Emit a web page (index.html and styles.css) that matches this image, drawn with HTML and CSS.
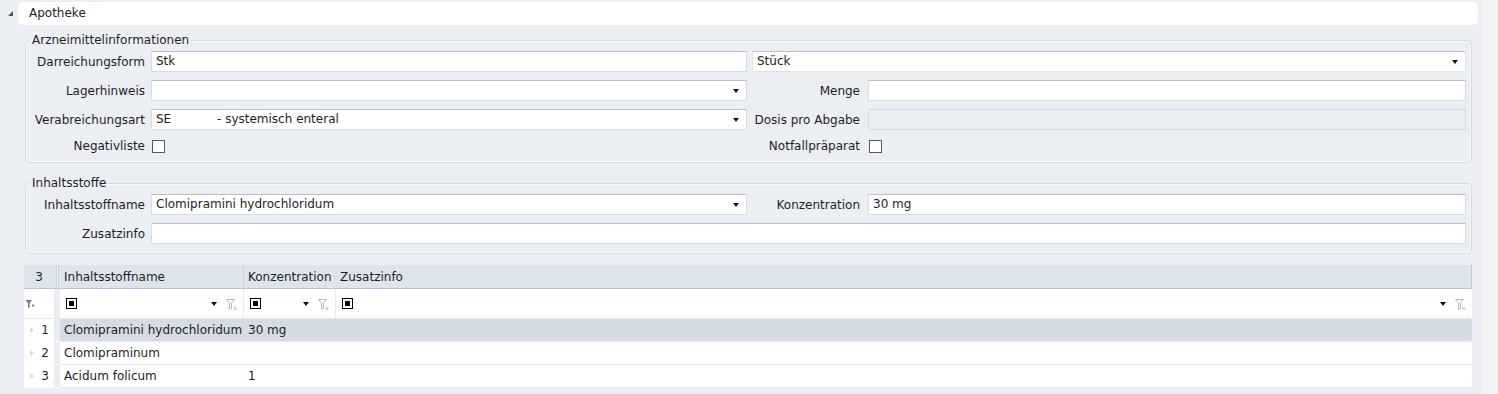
FILE: index.html
```html
<!DOCTYPE html>
<html lang="de">
<head>
    <meta charset="UTF-8">
    <meta name="viewport" content="width=device-width, initial-scale=1.0">
    <title>Apotheke</title>
    <link rel="stylesheet" href="styles.css">
</head>
<body>
    <div class="page">
        <!-- Kopfzeile des Bereichs -->
        <div class="panel-title">
            <span class="collapse-arrow"></span>
            <div class="panel-title-bar">Apotheke</div>
        </div>

        <!-- Arzneimittelinformationen -->
        <fieldset class="group">
            <legend>Arzneimittelinformationen</legend>
            <div class="form-grid">
                <label class="lbl">Darreichungsform</label>
                <div class="field first">Stk</div>
                <div class="field select wide">Stück</div>

                <label class="lbl">Lagerhinweis</label>
                <div class="field select first"></div>
                <label class="lbl lbl-right">Menge</label>
                <div class="field"></div>

                <label class="lbl">Verabreichungsart</label>
                <div class="field select first"><span class="code">SE</span>- systemisch enteral</div>
                <label class="lbl lbl-right">Dosis pro Abgabe</label>
                <div class="field disabled"></div>

                <label class="lbl">Negativliste</label>
                <div class="check-cell"><span class="checkbox"></span></div>
                <label class="lbl lbl-right">Notfallpräparat</label>
                <div class="check-cell"><span class="checkbox"></span></div>
            </div>
        </fieldset>

        <!-- Inhaltsstoffe -->
        <fieldset class="group group-second">
            <legend>Inhaltsstoffe</legend>
            <div class="form-grid">
                <label class="lbl">Inhaltsstoffname</label>
                <div class="field select first">Clomipramini hydrochloridum</div>
                <label class="lbl lbl-right">Konzentration</label>
                <div class="field">30 mg</div>

                <label class="lbl">Zusatzinfo</label>
                <div class="field full"></div>
            </div>
        </fieldset>

        <!-- Tabelle der Inhaltsstoffe -->
        <table class="grid">
            <colgroup>
                <col class="c-ind">
                <col class="c-name">
                <col class="c-conc">
                <col>
            </colgroup>
            <thead>
                <tr class="grid-head">
                    <th class="ind">3</th>
                    <th>Inhaltsstoffname</th>
                    <th>Konzentration</th>
                    <th class="last">Zusatzinfo</th>
                </tr>
                <tr class="grid-filter">
                    <td class="ind">
                        <svg width="10" height="10" viewBox="0 0 10 10">
                            <path d="M0.5 1h6.5L4.6 4v4.2L3 9V4z" fill="#7a7a7a"/>
                            <path d="M7.5 5l2 1.6-2 1.6z" fill="#555"/>
                        </svg>
                    </td>
                    <td><div class="flt"><span class="flt-box"></span><span class="flt-space"></span><span class="down"></span><svg class="flt-clear" width="12" height="12" viewBox="0 0 12 12"><path d="M0.5 0.5h8L5.5 4v5.5L3.5 10.5V4z" fill="none" stroke="#b9b9b9"/><path d="M7.5 8l3 3M10.5 8l-3 3" stroke="#b9b9b9"/></svg></div></td>
                    <td><div class="flt"><span class="flt-box"></span><span class="flt-space"></span><span class="down"></span><svg class="flt-clear" width="12" height="12" viewBox="0 0 12 12"><path d="M0.5 0.5h8L5.5 4v5.5L3.5 10.5V4z" fill="none" stroke="#b9b9b9"/><path d="M7.5 8l3 3M10.5 8l-3 3" stroke="#b9b9b9"/></svg></div></td>
                    <td class="last"><div class="flt"><span class="flt-box"></span><span class="flt-space"></span><span class="down"></span><svg class="flt-clear" width="12" height="12" viewBox="0 0 12 12"><path d="M0.5 0.5h8L5.5 4v5.5L3.5 10.5V4z" fill="none" stroke="#b9b9b9"/><path d="M7.5 8l3 3M10.5 8l-3 3" stroke="#b9b9b9"/></svg></div></td>
                </tr>
            </thead>
            <tbody>
                <tr class="selected">
                    <td class="ind"><span class="row-arrow"></span>1</td>
                    <td>Clomipramini hydrochloridum</td>
                    <td>30 mg</td>
                    <td class="last"></td>
                </tr>
                <tr>
                    <td class="ind"><span class="row-arrow"></span>2</td>
                    <td>Clomipraminum</td>
                    <td></td>
                    <td class="last"></td>
                </tr>
                <tr>
                    <td class="ind"><span class="row-arrow"></span>3</td>
                    <td>Acidum folicum</td>
                    <td>1</td>
                    <td class="last"></td>
                </tr>
            </tbody>
        </table>
    </div>
</body>
</html>
```

FILE: styles.css
```css
/* Grundeinstellungen */
* {
    box-sizing: border-box;
}

body {
    margin: 0;
    background-color: #f3f3f4;
    color: #1e1e1e;
    font-family: "DejaVu Sans", Verdana, sans-serif;
    font-size: 12px;
}

.page {
    width: 1482px;
    height: 394px;
    background-color: #ebeef3;
    padding: 2px 0 0 8px;
}

/* Kopfzeile */
.panel-title {
    display: flex;
    align-items: center;
}

.collapse-arrow {
    width: 10px;
    height: 23px;
    display: flex;
    align-items: center;
}

.collapse-arrow::before {
    content: "";
    width: 0;
    height: 0;
    border-bottom: 5px solid #555;
    border-left: 5px solid transparent;
}

.panel-title-bar {
    flex: 1;
    height: 23px;
    line-height: 23px;
    margin-right: 4px;
    padding-left: 11px;
    background-color: #ffffff;
    border-radius: 5px;
}

/* Gruppen */
.group {
    margin: 8px 10px 0 17px;
    padding: 0 5px 9px 0;
    border: 1px solid #d3d9e1;
    border-radius: 4px;
    box-shadow: inset 0 0 0 1px #f7f8fa;
    min-width: 0;
}

.group legend {
    margin-left: 4px;
    padding: 0 2px;
    line-height: 14px;
}

.group-second {
    margin-top: 13px;
}

.form-grid {
    display: grid;
    grid-template-columns: 125px 601px 116px 1fr;
    row-gap: 8px;
    align-items: center;
    padding-top: 4px;
}

.lbl {
    text-align: right;
    padding-right: 6px;
    white-space: nowrap;
}

.lbl.lbl-right {
    padding-right: 8px;
}

/* Eingabefelder */
.field {
    position: relative;
    height: 21px;
    line-height: 19px;
    padding: 0 20px 0 4px;
    background-color: #ffffff;
    border: 1px solid #d4dce6;
    border-top-color: #b9c0c7;
    white-space: nowrap;
}

.field.first {
    margin-right: 5px;
}

.field.wide {
    grid-column: 3 / 5;
    border-color: #dde7e2;
    border-top-color: #b9c0c7;
}

.field.full {
    grid-column: 2 / 5;
}

.field.disabled {
    background-color: #ebeef3;
    border-color: #d0d9e4;
}

.field.select::after {
    content: "";
    position: absolute;
    right: 7px;
    top: 8px;
    border-left: 3px solid transparent;
    border-right: 3px solid transparent;
    border-top: 4px solid #111;
}

.code {
    display: inline-block;
    width: 61px;
}

.check-cell {
    height: 15px;
    padding: 2px 0 0 1px;
}

.checkbox {
    display: block;
    width: 13px;
    height: 13px;
    background-color: #ffffff;
    border: 1px solid #5a5a5a;
}

/* Tabelle */
.grid {
    width: 1448px;
    margin: 11px 0 0 16px;
    border-collapse: separate;
    border-spacing: 0;
    table-layout: fixed;
}

.c-ind {
    width: 36px;
}

.c-name {
    width: 184px;
}

.c-conc {
    width: 92px;
}

.grid th,
.grid td {
    padding: 0 0 0 4px;
    text-align: left;
    font-weight: normal;
    white-space: nowrap;
    overflow: hidden;
}

.grid-head th {
    height: 24px;
    background-color: #dee4ec;
    border-bottom: 1px solid #b8c6d5;
    border-right: 1px solid #c9d3de;
}

.grid-head th:nth-child(3) {
    border-right-color: #dee4ec;
}

.grid-head th.ind {
    text-align: center;
    padding: 0 6px 0 0;
    border-right: none;
    background: linear-gradient(to right, #dee4ec 32px, #c7d0da 32px, #c7d0da 33px, #f1f4f7 33px, #f1f4f7 34px, #c7d0da 34px, #c7d0da 35px, #dee4ec 35px);
}

.grid-head th.last {
    border-right: 1px solid #b8c6d5;
}

.grid-filter td {
    height: 30px;
    background-color: #ffffff;
    border-right: 1px solid #e6eaef;
    border-bottom: 1px solid #e6eaef;
}

.grid-filter td.ind {
    padding: 3px 0 0 1px;
    border-right: none;
    box-shadow: inset -6px 0 #e9ecf0;
}

.grid-filter td.last {
    border-right: none;
}

.flt {
    display: flex;
    align-items: center;
    padding: 0 5px 0 2px;
}

.flt-box {
    width: 11px;
    height: 11px;
    background-color: #000;
    border: 1px solid #000;
    box-shadow: inset 0 0 0 2px #fff;
}

.flt-space {
    flex: 1;
}

.down {
    width: 0;
    height: 0;
    margin-right: 9px;
    border-left: 3px solid transparent;
    border-right: 3px solid transparent;
    border-top: 4px solid #111;
}

.flt-clear {
    margin-top: 2px;
}

.grid tbody td {
    height: 23px;
    background-color: #ffffff;
    border-bottom: 1px solid #e6e9ee;
}

.grid tbody td.ind {
    position: relative;
    text-align: right;
    padding: 0 11px 0 0;
    box-shadow: inset -6px 0 #e9ecf0;
    border-bottom-color: #ffffff;
}

.row-arrow {
    position: absolute;
    left: 6px;
    top: 8px;
    border-top: 3px solid transparent;
    border-bottom: 3px solid transparent;
    border-left: 4px solid #d8dce1;
}

.grid tbody tr.selected td {
    background-color: #d5dce6;
}

.grid tbody tr.selected td.ind {
    background-color: #ffffff;
}

.grid tbody tr.selected td.last {
    border-radius: 0 4px 4px 0;
}
```
